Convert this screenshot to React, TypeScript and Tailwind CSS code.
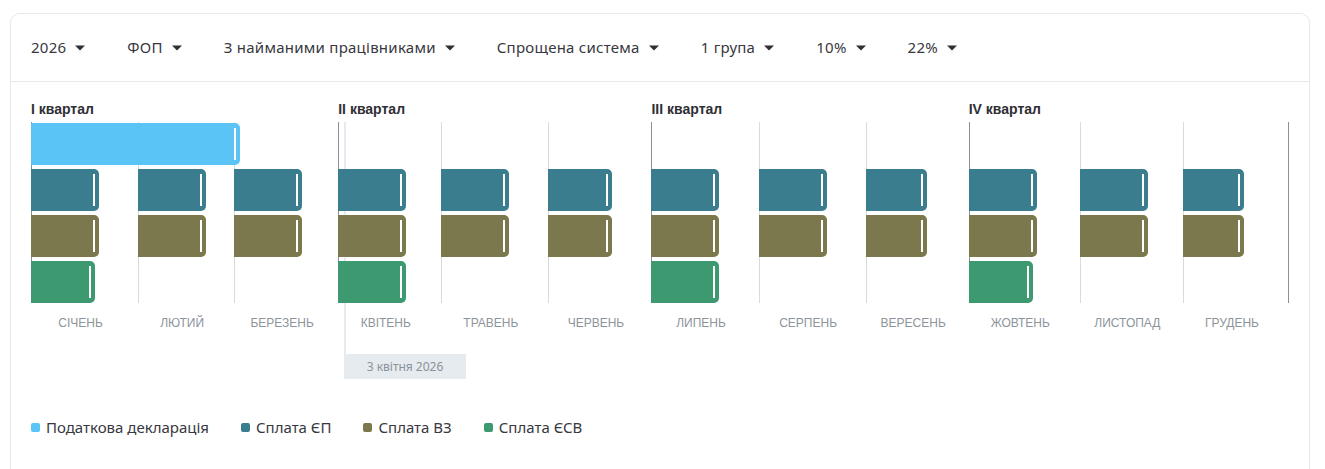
import React from "react";

// Payment calendar for a sole proprietor (ФОП) — 2026
const filters = [
  "2026",
  "ФОП",
  "З найманими працівниками",
  "Спрощена система",
  "1 група",
  "10%",
  "22%",
];

const months = [
  "Січень",
  "Лютий",
  "Березень",
  "Квітень",
  "Травень",
  "Червень",
  "Липень",
  "Серпень",
  "Вересень",
  "Жовтень",
  "Листопад",
  "Грудень",
];

const quarters = ["I квартал", "II квартал", "III квартал", "IV квартал"];

// widths in px, null = no payment that month
const epWidths = [67, 67, 67, 67, 67, 63, 67, 67, 60, 67, 67, 60];
const esvWidths: (number | null)[] = [63, null, null, 67, null, null, 67, null, null, 63, null, null];

const legend = [
  { label: "Податкова декларація", color: "bg-[#5bc4f7]" },
  { label: "Сплата ЄП", color: "bg-[#3a7d8f]" },
  { label: "Сплата ВЗ", color: "bg-[#7b784d]" },
  { label: "Сплата ЄСВ", color: "bg-[#3d9a70]" },
];

function Caret() {
  return (
    <svg width="10" height="6" viewBox="0 0 10 6" className="ml-[9px] shrink-0">
      <path d="M0 0.5h10L5 5.5z" fill="#2f2f35" />
    </svg>
  );
}

function TaskBar({ width, color }: { width: number; color: string }) {
  return (
    <div
      className={`relative z-10 -ml-px h-[42px] shrink-0 rounded-r-[5px] ${color}`}
      style={{ width }}
    >
      <span className="absolute right-[4px] top-[5px] bottom-[5px] w-[2px] bg-white" />
    </div>
  );
}

export default function App() {
  return (
    <div className="min-h-screen bg-white pt-[13px] pl-[10px] font-['Noto_Sans',sans-serif] text-[#38383e]">
      <div className="w-[1300px] rounded-[10px] border border-[#e8e8ef] bg-white pb-10">
        {/* Filters */}
        <div className="flex h-[68px] items-center gap-[42px] border-b border-[#e8e8ef] pl-5 text-[15px] tracking-[0.25px]">
          {filters.map((f) => (
            <div key={f} className="flex items-center">
              <span>{f}</span>
              <Caret />
            </div>
          ))}
        </div>

        {/* Timeline */}
        <div className="px-5 pt-[17px]">
          <div className="relative">
            <div className="grid grid-cols-[minmax(0,107fr)_minmax(0,96fr)_minmax(0,104fr)_minmax(0,103fr)_minmax(0,107fr)_minmax(0,103fr)_minmax(0,107fr)_minmax(0,107fr)_minmax(0,103fr)_minmax(0,111fr)_minmax(0,103fr)_minmax(0,106fr)]">
              {quarters.map((q) => (
                <div
                  key={q}
                  className="col-span-3 mb-[5px] h-[18px] font-['Liberation_Sans',sans-serif] text-[14px] font-bold leading-[20px] text-[#2f2f35]"
                >
                  {q}
                </div>
              ))}

              {months.map((m, i) => {
                const quarterStart = i % 3 === 0;
                const last = i === 11;
                return (
                  <div
                    key={m}
                    className={`flex h-[181px] flex-col gap-1 border-l pt-px ${
                      quarterStart ? "border-[#8b9096]" : "border-[#dadada]"
                    } ${last ? "border-r border-r-[#8b9096]" : ""}`}
                  >
                    <div className="h-[42px]">
                      {i === 0 && <TaskBar width={209} color="bg-[#5bc4f7]" />}
                    </div>
                    <TaskBar width={epWidths[i] + 1} color="bg-[#3a7d8f]" />
                    <TaskBar width={epWidths[i] + 1} color="bg-[#7b784d]" />
                    <div className="h-[42px]">
                      {esvWidths[i] !== null && (
                        <TaskBar width={(esvWidths[i] as number) + 1} color="bg-[#3d9a70]" />
                      )}
                    </div>
                  </div>
                );
              })}

              {months.map((m) => (
                <div
                  key={m + "-label"}
                  className="flex h-10 items-center justify-center pr-2 font-['Liberation_Sans',sans-serif] text-[12px] uppercase text-[#8d949b]"
                >
                  {m}
                </div>
              ))}
            </div>

            {/* Today marker: 3 April */}
            <div className="absolute left-[313px] top-[23px] h-[232px] w-[2px] bg-[#e6ebf0]" />
            <div className="absolute left-[313px] top-[255px] flex h-[25px] w-[122px] items-center justify-center bg-[#e6ebf0] text-[12px] text-[#8a929a]">
              3 квітня 2026
            </div>
          </div>

          {/* Legend */}
          <div className="mt-[73px] flex items-center gap-8 text-[15px]">
            {legend.map((l) => (
              <div key={l.label} className="flex items-center gap-[6px]">
                <span className={`h-[9px] w-[9px] rounded-[2px] ${l.color}`} />
                <span>{l.label}</span>
              </div>
            ))}
          </div>
        </div>
      </div>
    </div>
  );
}
